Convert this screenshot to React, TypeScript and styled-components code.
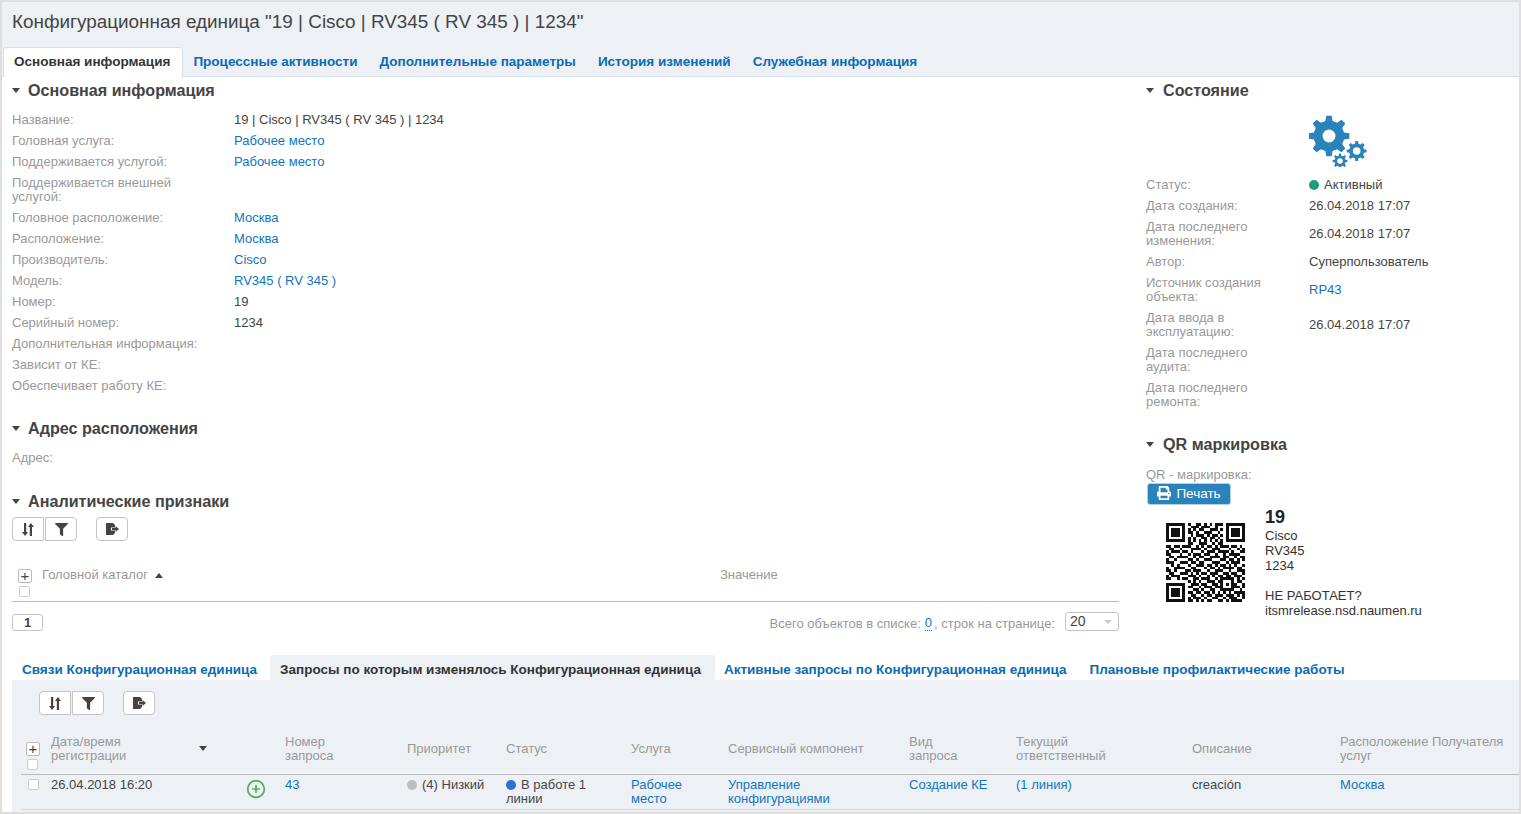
import styled, { createGlobalStyle } from "styled-components";
import { FaFilter, FaPrint } from "react-icons/fa";
import { CirclePlus } from "lucide-react";

const GlobalStyle = createGlobalStyle`
  html, body {
    margin: 0;
    padding: 0;
    background: #fff;
  }
  body {
    font-family: "Liberation Sans", Arial, sans-serif;
    font-size: 13px;
    color: #444;
  }
`;

const mainRows: [string, string, boolean?][] = [
  ["Название:", "19 | Cisco | RV345 ( RV 345 ) | 1234"],
  ["Головная услуга:", "Рабочее место", true],
  ["Поддерживается услугой:", "Рабочее место", true],
  ["Поддерживается внешней\nуслугой:", ""],
  ["Головное расположение:", "Москва", true],
  ["Расположение:", "Москва", true],
  ["Производитель:", "Cisco", true],
  ["Модель:", "RV345 ( RV 345 )", true],
  ["Номер:", "19"],
  ["Серийный номер:", "1234"],
  ["Дополнительная информация:", ""],
  ["Зависит от КЕ:", ""],
  ["Обеспечивает работу КЕ:", ""],
];

const stateRows: [string, string, boolean?][] = [
  ["Дата создания:", "26.04.2018 17:07"],
  ["Дата последнего\nизменения:", "26.04.2018 17:07"],
  ["Автор:", "Суперпользователь"],
  ["Источник создания\nобъекта:", "RP43", true],
  ["Дата ввода в\nэксплуатацию:", "26.04.2018 17:07"],
  ["Дата последнего\nаудита:", ""],
  ["Дата последнего\nремонта:", ""],
];

const qrRows = [
  "11111110100110101011101111111",
  "10000010011101110010001000001",
  "10111010101011001110101011101",
  "10111010110100111001001011101",
  "10111010010111010110101011101",
  "10000010101001101101001000001",
  "11111110101010101010101111111",
  "00000000110011100101100000000",
  "11011011100101011010111011010",
  "01100100011110100111000100101",
  "10111011010001011101111010011",
  "11000100101110110010010111100",
  "01101111001011001111011001011",
  "10010000110100111000110110101",
  "11100111011011000111001011100",
  "00101000100111011010110101001",
  "10011110011000101101011110110",
  "11010001101110010011100100111",
  "01100111010101101110011011001",
  "10111000111010010101101101110",
  "11001011001101110010111110101",
  "00000000101010011101100010110",
  "11111110011101100110101011001",
  "10000010110010111011100011101",
  "10111010001101001100111110010",
  "10111010110110110101010101111",
  "10111010011001011011101110101",
  "10000010101110100110010111001",
  "11111110110101011001101011110",
];

const qrPath = qrRows
  .map((row, y) =>
    row
      .split("")
      .map((cell, x) => (cell === "1" ? `M${x} ${y}h1v1h-1z` : ""))
      .join("")
  )
  .join("");

function gearPath(cx: number, cy: number, outer: number, inner: number, hole: number) {
  const teeth = 8;
  const points: string[] = [];
  for (let i = 0; i < teeth; i++) {
    const step = (Math.PI * 2) / teeth;
    const a = i * step;
    const corners: [number, number][] = [
      [inner, a - step * 0.3],
      [outer, a - step * 0.17],
      [outer, a + step * 0.17],
      [inner, a + step * 0.3],
    ];
    corners.forEach(([r, t]) => {
      points.push(`${(cx + r * Math.cos(t)).toFixed(2)} ${(cy + r * Math.sin(t)).toFixed(2)}`);
    });
  }
  const circle = `M${cx - hole} ${cy}a${hole} ${hole} 0 1 0 ${hole * 2} 0a${hole} ${hole} 0 1 0 ${-hole * 2} 0z`;
  return `M${points.join("L")}z${circle}`;
}

function SortIcon() {
  return (
    <svg width="12" height="13" viewBox="0 0 12 13" fill="#444">
      <path d="M2 0h2.2v9H6L3.1 13 0 9h2z" />
      <path d="M7.8 13H10V4h2L8.9 0 6 4h1.8z" />
    </svg>
  );
}

function ExportIcon() {
  return (
    <svg width="13" height="12" viewBox="0 0 13 12" fill="#444">
      <path d="M0 0h7l2 2v2.5H5v3h4V10l-2 2H0z" />
      <path d="M6 5h3.5V3L13 6l-3.5 3V7H6z" />
    </svg>
  );
}

function Toolbar({ $inset }: { $inset?: boolean }) {
  return (
    <ToolRow $inset={$inset}>
      <ToolButton>
        <SortIcon />
      </ToolButton>
      <ToolButton $next>
        <FaFilter size={13} color="#444" />
      </ToolButton>
      <ToolButton $apart>
        <ExportIcon />
      </ToolButton>
    </ToolRow>
  );
}

function Heading({ children, $top, $bottom }: { children: string; $top?: number; $bottom?: number }) {
  return (
    <SectionTitle $top={$top} $bottom={$bottom}>
      <Caret />
      {children}
    </SectionTitle>
  );
}

export default function App() {
  return (
    <>
      <GlobalStyle />
      <Page>
        <Header>
          <Title>Конфигурационная единица "19 | Cisco | RV345 ( RV 345 ) | 1234"</Title>
          <TabBar>
            <Tab $active>Основная информация</Tab>
            <Tab>Процессные активности</Tab>
            <Tab>Дополнительные параметры</Tab>
            <Tab>История изменений</Tab>
            <Tab>Служебная информация</Tab>
          </TabBar>
        </Header>

        <Columns>
          <LeftColumn>
            <Heading $bottom={5}>Основная информация</Heading>
            {mainRows.map(([label, value, link]) => (
              <MainRow key={label}>
                <Label>{label}</Label>
                {link ? <Link>{value}</Link> : <span>{value}</span>}
              </MainRow>
            ))}

            <Heading $top={20} $bottom={5}>Адрес расположения</Heading>
            <MainRow>
              <Label>Адрес:</Label>
            </MainRow>

            <Heading $top={21} $bottom={2}>Аналитические признаки</Heading>
            <Toolbar />

            <CatalogHead>
              <BoxStack>
                <PlusBox>+</PlusBox>
                <CheckBox />
              </BoxStack>
              <CatalogName>
                Головной каталог
                <SortUp />
              </CatalogName>
              <CatalogValue>Значение</CatalogValue>
            </CatalogHead>

            <Pager>
              <PageButton>1</PageButton>
              <PagerRight>
                <PagerLabel>Всего объектов в списке:</PagerLabel>
                <CountLink>0</CountLink>
                <PagerLabel>, строк на странице:</PagerLabel>
                <PageSize>
                  20
                  <SelectArrow />
                </PageSize>
              </PagerRight>
            </Pager>
          </LeftColumn>

          <RightColumn>
            <Heading>Состояние</Heading>
            <GearBox>
              <svg width="58" height="52" viewBox="0 0 58 52" fill="#2b83bb" fillRule="evenodd">
                <path d={gearPath(20, 21, 20.5, 15.5, 6.5)} />
                <path d={gearPath(47.7, 36, 10, 7.5, 3.8)} />
                <path d={gearPath(31, 46, 7.5, 5.5, 2.8)} />
              </svg>
            </GearBox>
            <StateRow>
              <Label>Статус:</Label>
              <span>
                <Dot $color="#1a9e7f" />
                Активный
              </span>
            </StateRow>
            {stateRows.map(([label, value, link]) => (
              <StateRow key={label}>
                <Label>{label}</Label>
                {link ? <Link>{value}</Link> : <span>{value}</span>}
              </StateRow>
            ))}

            <Heading $top={20} $bottom={10}>QR маркировка</Heading>
            <QrLabel>QR - маркировка:</QrLabel>
            <PrintButton>
              <FaPrint size={14} color="#fff" />
              Печать
            </PrintButton>
            <QrBlock>
              <QrCode width="79" height="79" viewBox="0 0 29 29" shapeRendering="crispEdges">
                <path d={qrPath} fill="#111" />
              </QrCode>
              <QrText>
                <QrNumber>19</QrNumber>
                <div>Cisco</div>
                <div>RV345</div>
                <div>1234</div>
                <QrHint>НЕ РАБОТАЕТ?</QrHint>
                <div>itsmrelease.nsd.naumen.ru</div>
              </QrText>
            </QrBlock>
          </RightColumn>
        </Columns>

        <SubTabs>
          <SubTab>Связи Конфигурационная единица</SubTab>
          <SubTab $active>Запросы по которым изменялось Конфигурационная единица</SubTab>
          <SubTab>Активные запросы по Конфигурационная единица</SubTab>
          <SubTab>Плановые профилактические работы</SubTab>
        </SubTabs>

        <Panel>
          <Toolbar $inset />
          <RequestHead>
            <BoxCell>
              <PlusBox>+</PlusBox>
              <CheckBox />
            </BoxCell>
            <HeadCell>
              Дата/время
              <br />
              регистрации
              <SortDown />
            </HeadCell>
            <HeadCell />
            <HeadCell>
              Номер
              <br />
              запроса
            </HeadCell>
            <HeadCell>Приоритет</HeadCell>
            <HeadCell>Статус</HeadCell>
            <HeadCell>Услуга</HeadCell>
            <HeadCell>Сервисный компонент</HeadCell>
            <HeadCell>
              Вид
              <br />
              запроса
            </HeadCell>
            <HeadCell>
              Текущий
              <br />
              ответственный
            </HeadCell>
            <HeadCell>Описание</HeadCell>
            <HeadCell>
              Расположение Получателя
              <br />
              услуг
            </HeadCell>
          </RequestHead>
          <RequestRow>
            <RowBoxCell>
              <CheckBox />
            </RowBoxCell>
            <Cell>26.04.2018 16:20</Cell>
            <IconCell>
              <CirclePlus size={20} color="#4cb050" strokeWidth={2} />
            </IconCell>
            <Cell>
              <Link>43</Link>
            </Cell>
            <Cell>
              <Dot $color="#bdbdbd" />
              (4) Низкий
            </Cell>
            <Cell>
              <Dot $color="#2f6fd0" />
              В работе 1
              <br />
              линии
            </Cell>
            <Cell>
              <Link>
                Рабочее
                <br />
                место
              </Link>
            </Cell>
            <Cell>
              <Link>
                Управление
                <br />
                конфигурациями
              </Link>
            </Cell>
            <Cell>
              <Link>Создание КЕ</Link>
            </Cell>
            <Cell>
              <Link>(1 линия)</Link>
            </Cell>
            <Cell>creación</Cell>
            <Cell>
              <Link>Москва</Link>
            </Cell>
          </RequestRow>
        </Panel>
      </Page>
    </>
  );
}

const Page = styled.div`
  box-sizing: border-box;
  width: 1521px;
  height: 814px;
  border: 2px solid #dedede;
  overflow: hidden;
  display: flex;
  flex-direction: column;
`;

const Header = styled.header`
  background: #edf1f6;
  border-bottom: 1px solid #d6e0ea;
`;

const Title = styled.h1`
  margin: 0;
  padding: 0 0 5px 10px;
  font-size: 18.9px;
  font-weight: normal;
  line-height: 40px;
  color: #444;
`;

const TabBar = styled.nav`
  display: flex;
  padding-left: 1px;
  height: 29px;
`;

const Tab = styled.div<{ $active?: boolean }>`
  box-sizing: border-box;
  height: ${(p) => (p.$active ? "30px" : "29px")};
  padding: 0 ${(p) => (p.$active ? "12px" : "11px")} 0 ${(p) => (p.$active ? "10px" : "11px")};
  margin-right: ${(p) => (p.$active ? "-1px" : "0")};
  font-size: 13.53px;
  font-weight: bold;
  line-height: ${(p) => (p.$active ? "28px" : "30px")};
  color: ${(p) => (p.$active ? "#333" : "#0a6bb5")};
  background: ${(p) => (p.$active ? "#fff" : "transparent")};
  border: ${(p) => (p.$active ? "1px solid #d6e0ea" : "0")};
  border-bottom: 0;
  border-radius: 4px 4px 0 0;
`;

const Columns = styled.div`
  display: flex;
  gap: 27px;
  margin-left: 10px;
  padding-top: 1px;
  height: 577px;
`;

const LeftColumn = styled.section`
  width: 1107px;
  flex: none;
`;

const SectionTitle = styled.h2<{ $top?: number; $bottom?: number }>`
  box-sizing: border-box;
  display: flex;
  align-items: center;
  height: 26px;
  padding-bottom: 2px;
  margin: ${(p) => p.$top ?? 0}px 0 ${(p) => p.$bottom ?? 0}px;
  font-size: 16.15px;
  font-weight: bold;
  color: #444;
`;

const Caret = styled.span`
  width: 0;
  height: 0;
  margin-right: 8px;
  border-left: 4.5px solid transparent;
  border-right: 4.5px solid transparent;
  border-top: 5px solid #444;
`;

const RightColumn = styled.section`
  flex: 1;

  & ${Caret} {
    margin-right: 9px;
  }
`;

const MainRow = styled.div`
  display: grid;
  grid-template-columns: 222px 1fr;
  padding: 4px 0 3px;
  line-height: 14px;
  color: #444;
`;

const StateRow = styled.div`
  display: grid;
  grid-template-columns: 163px 1fr;
  align-items: center;
  padding: 4px 0 3px;
  line-height: 14px;
  color: #444;
`;

const Label = styled.span`
  color: #999;
  white-space: pre-line;
`;

const QrLabel = styled(Label)`
  display: block;
  margin: 0 0 1px;
  line-height: 14px;
`;

const PagerLabel = styled(Label)`
  margin-top: 3px;
`;

const Link = styled.span`
  color: #0f75bf;
`;

const ToolRow = styled.div<{ $inset?: boolean }>`
  display: flex;
  padding-left: ${(p) => (p.$inset ? "27px" : "0")};
`;

const ToolButton = styled.div<{ $next?: boolean; $apart?: boolean }>`
  box-sizing: border-box;
  width: 32px;
  height: 24px;
  margin-left: ${(p) => (p.$next ? "1px" : p.$apart ? "19px" : "0")};
  display: flex;
  align-items: center;
  justify-content: center;
  background: #fff;
  border: 1px solid #c4c4c4;
  border-radius: ${(p) => (p.$next ? "0 4px 4px 0" : p.$apart ? "4px" : "4px 0 0 4px")};
`;

const CatalogHead = styled.div`
  display: grid;
  grid-template-columns: 24px 678px 1fr;
  align-items: start;
  margin-top: 28px;
  padding: 0 0 5px 6px;
  height: 27px;
  border-bottom: 1px solid #bbb;
  line-height: 14px;
`;

const BoxStack = styled.div`
  display: flex;
  flex-direction: column;
  gap: 3px;
`;

const BoxCell = styled(BoxStack)`
  align-self: start;
  padding: 10px 0 0 5px;
`;

const RowBoxCell = styled.div`
  padding: 4px 0 0 6px;
`;

const PlusBox = styled.span`
  box-sizing: border-box;
  width: 14px;
  height: 14px;
  display: flex;
  align-items: center;
  justify-content: center;
  background: #fff;
  border: 1px solid #bbb;
  border-radius: 2px;
  font-size: 15px;
  line-height: 12px;
  color: #444;
`;

const CheckBox = styled.span`
  box-sizing: border-box;
  display: block;
  width: 11px;
  height: 11px;
  margin-left: 1px;
  background: #fff;
  border: 1px solid #ccc;
  border-radius: 2px;
`;

const CatalogName = styled(Label)`
  display: flex;
  align-items: center;
  margin-top: -1px;
`;

const CatalogValue = styled(Label)`
  margin-top: -1px;
`;

const SortUp = styled.span`
  width: 0;
  height: 0;
  margin-left: 7px;
  border-left: 4px solid transparent;
  border-right: 4px solid transparent;
  border-bottom: 5px solid #444;
`;

const SortDown = styled.span`
  position: absolute;
  top: 11px;
  left: 152px;
  width: 0;
  height: 0;
  border-left: 4.5px solid transparent;
  border-right: 4.5px solid transparent;
  border-top: 5px solid #444;
`;

const Pager = styled.div`
  display: flex;
  justify-content: space-between;
  align-items: flex-start;
  margin-top: 10px;
`;

const PageButton = styled.div`
  box-sizing: border-box;
  width: 31px;
  height: 17px;
  margin-top: 2px;
  text-align: center;
  font-weight: bold;
  line-height: 15px;
  border: 1px solid #c4c4c4;
  border-radius: 3px;
`;

const PagerRight = styled.div`
  display: flex;
  align-items: center;
  height: 19px;
`;

const CountLink = styled(Link)`
  margin: 3px 2px 0 4px;
  border-bottom: 1px dotted #0f75bf;
  line-height: 14px;
`;

const PageSize = styled.div`
  box-sizing: border-box;
  position: relative;
  width: 54px;
  height: 19px;
  margin-left: 10px;
  padding-left: 4px;
  font-size: 14px;
  line-height: 16px;
  border: 1px solid #c4c4c4;
  border-radius: 3px;
`;

const SelectArrow = styled.span`
  position: absolute;
  right: 6px;
  top: 7px;
  width: 0;
  height: 0;
  border-left: 4px solid transparent;
  border-right: 4px solid transparent;
  border-top: 4px solid #c5ccd4;
`;

const GearBox = styled.div`
  padding: 11px 0 7px 163px;
  height: 52px;

  & svg {
    display: block;
  }
`;

const Dot = styled.span<{ $color: string }>`
  display: inline-block;
  width: 10px;
  height: 10px;
  margin-right: 5px;
  border-radius: 50%;
  background: ${(p) => p.$color};
  vertical-align: -1px;
`;

const PrintButton = styled.div`
  box-sizing: border-box;
  display: flex;
  align-items: center;
  justify-content: center;
  gap: 5px;
  width: 84px;
  height: 22px;
  margin: 0 0 0 1px;
  padding-bottom: 2px;
  background: #2b83bb;
  border: 1px solid #b9cfdf;
  border-radius: 3px;
  font-size: 13.5px;
  color: #fff;
`;

const QrBlock = styled.div`
  display: flex;
  margin-top: 2px;
`;

const QrCode = styled.svg`
  flex: none;
  margin: 16px 20px 0 20px;
`;

const QrText = styled.div`
  font-size: 13px;
  line-height: 15px;
  color: #333;
`;

const QrNumber = styled.div`
  font-size: 18px;
  font-weight: bold;
  line-height: 20px;
  margin-bottom: 1px;
  color: #222;
`;

const QrHint = styled.div`
  margin-top: 15px;
`;

const SubTabs = styled.nav`
  display: flex;
  align-items: flex-end;
  height: 25px;
  margin-left: 10px;
`;

const SubTab = styled.div<{ $active?: boolean }>`
  height: 25px;
  padding: 0 ${(p) => (p.$active ? "14px" : "10px")} 0 10px;
  margin-right: ${(p) => (p.$active ? "-1px" : "3px")};
  font-size: 13.5px;
  font-weight: bold;
  line-height: 30px;
  color: ${(p) => (p.$active ? "#333" : "#0a6bb5")};
  background: ${(p) => (p.$active ? "#edf1f6" : "transparent")};
  border-radius: 3px 3px 0 0;
`;

const Panel = styled.section`
  flex: 1;
  margin-left: 10px;
  padding: 11px 0 0 0;
  background: #edf1f6;
  line-height: 14px;
`;

const gridColumns = "26px 196px 38px 122px 99px 125px 97px 181px 107px 176px 148px 183px";

const RequestHead = styled.div`
  display: grid;
  grid-template-columns: ${gridColumns};
  grid-template-rows: 34px;
  align-items: center;
  height: 34px;
  padding-bottom: 8px;
  margin: 17px 0 0 9px;
  border-bottom: 1px solid #bbb;
`;

const HeadCell = styled.div`
  position: relative;
  padding-left: 4px;
  color: #999;
  white-space: nowrap;
`;

const RequestRow = styled.div`
  display: grid;
  grid-template-columns: ${gridColumns};
  height: 34px;
  margin-left: 9px;
  border-bottom: 1px solid #d5d9de;
`;

const Cell = styled.div`
  padding: 3px 0 0 4px;
  color: #444;
  white-space: nowrap;
`;

const IconCell = styled.div`
  padding: 4px 0 0 3px;
`;
